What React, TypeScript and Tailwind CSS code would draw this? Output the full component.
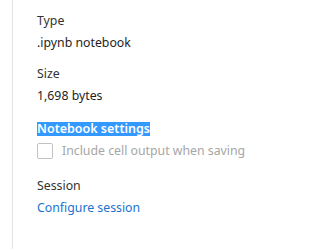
export default function App() {
  return (
    <div className="h-screen w-full bg-white pl-3">
      <div className="flex h-full flex-col border-l border-[#e3e3e3] pl-6 pt-[10px] font-['Noto_Sans',sans-serif] text-[12.3px] leading-[22px]">
        <div className="text-[#333333]">Type</div>
        <div className="text-[#1e1e1e]">.ipynb notebook</div>

        <div className="mt-[9px] text-[#333333]">Size</div>
        <div className="text-[#1e1e1e]">1,698 bytes</div>

        <div className="mt-[11px] flex h-[22px] items-center">
          <span className="inline-block bg-[#3399ff] text-[12.5px] font-semibold leading-[14px] text-white">
            Notebook settings
          </span>
        </div>
        <label className="flex items-start">
          <span className="mt-[3px] block h-4 w-4 rounded-[2px] border border-[#c2c2c2] bg-white" />
          <span className="ml-[9px] text-[#a6a6a6]">Include cell output when saving</span>
        </label>

        <div className="mt-[13px] text-[#333333]">Session</div>
        <a className="text-[#1a73d1]" href="#">
          Configure session
        </a>
      </div>
    </div>
  );
}
